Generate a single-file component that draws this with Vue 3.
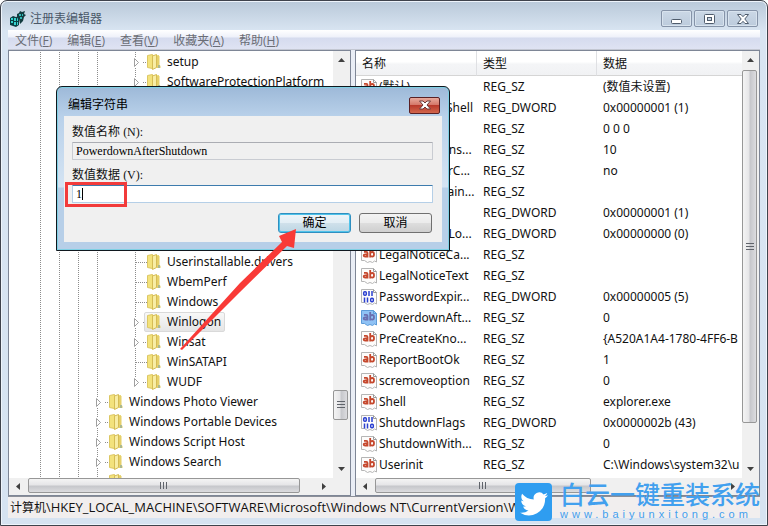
<script setup>
import { ref } from 'vue'

const menus = [
  { label: '文件', key: 'F' },
  { label: '编辑', key: 'E' },
  { label: '查看', key: 'V' },
  { label: '收藏夹', key: 'A' },
  { label: '帮助', key: 'H' },
]

// each entry is one ancestor column; true draws its dotted line
const deep = [true, true, true, true, false]
const shallow = [true, true, true]
const tree = [
  { guides: deep, label: 'setup', expandable: true },
  { guides: deep, label: 'SoftwareProtectionPlatform', expandable: true },
  ...Array.from({ length: 8 }, () => ({ guides: deep })),
  { guides: deep, label: 'Userinstallable.drivers' },
  { guides: deep, label: 'WbemPerf' },
  { guides: deep, label: 'Windows' },
  { guides: deep, label: 'Winlogon', expandable: true, selected: true },
  { guides: deep, label: 'Winsat', expandable: true },
  { guides: deep, label: 'WinSATAPI' },
  { guides: deep, label: 'WUDF', expandable: true, last: true },
  { guides: shallow, label: 'Windows Photo Viewer', expandable: true },
  { guides: shallow, label: 'Windows Portable Devices', expandable: true },
  { guides: shallow, label: 'Windows Script Host', expandable: true },
  { guides: shallow, label: 'Windows Search', expandable: true },
  { guides: shallow, label: '', expandable: true },
]

const values = [
  { name: '(默认)', type: 'REG_SZ', data: '(数值未设置)' },
  { name: 'AutoRestartShell', type: 'REG_DWORD', data: '0x00000001 (1)' },
  { name: '', type: 'REG_SZ', data: '0 0 0' },
  { name: 'CachedLogons...', type: 'REG_SZ', data: '10' },
  { name: 'DebugServerC...', type: 'REG_SZ', data: 'no' },
  { name: 'DefaultDomain...', type: 'REG_SZ', data: '' },
  { name: '', type: 'REG_DWORD', data: '0x00000001 (1)' },
  { name: 'ForceUnlockLo...', type: 'REG_DWORD', data: '0x00000000 (0)' },
  { name: 'LegalNoticeCa...', type: 'REG_SZ', data: '' },
  { name: 'LegalNoticeText', type: 'REG_SZ', data: '' },
  { name: 'PasswordExpir...', type: 'REG_DWORD', data: '0x00000005 (5)' },
  { name: 'PowerdownAft...', type: 'REG_SZ', data: '0', selected: true },
  { name: 'PreCreateKno...', type: 'REG_SZ', data: '{A520A1A4-1780-4FF6-B' },
  { name: 'ReportBootOk', type: 'REG_SZ', data: '1' },
  { name: 'scremoveoption', type: 'REG_SZ', data: '0' },
  { name: 'Shell', type: 'REG_SZ', data: 'explorer.exe' },
  { name: 'ShutdownFlags', type: 'REG_DWORD', data: '0x0000002b (43)' },
  { name: 'ShutdownWith...', type: 'REG_SZ', data: '0' },
  { name: 'Userinit', type: 'REG_SZ', data: 'C:\\Windows\\system32\\u' },
]

const path = '\\HKEY_LOCAL_MACHINE\\SOFTWARE\\Microsoft\\Windows NT\\CurrentVersion\\Win'
const valueName = 'PowerdownAfterShutdown'
const valueData = ref('1')
</script>

<template>
  <div class="window">
    <header class="titlebar">
      <svg class="app-icon" width="18" height="18" viewBox="0 0 18 18">
        <path d="M1 8l3-2 3 1 3-1v9l-3 2-6-2z" fill="#0b3f44" />
        <path d="M2 8h2v2H2zM5 8h2v3H5zM2 11h2v2H2zM5 12h2v3H5zM8 8h1v3H8zM8 12h1v3H8z" fill="#35d3cf" />
        <path d="M8 4l2-1 1-2 2 1 3-1-1 3 2 1-2 2-1 4-3 3-1-5-2-1z" fill="#123c40" />
        <path d="M10 4h2v2h-2zM13 4h1v2h-1zM11 7h2v2h-2z" fill="#2fb9b6" />
      </svg>
      <h1 class="title">注册表编辑器</h1>
      <div class="caption-buttons">
        <button class="caption" type="button" aria-label="最小化">
          <svg width="12" height="12" viewBox="0 0 12 12"><rect x="0.5" y="6.5" width="10" height="4" rx="1" fill="#fff" stroke="#4f5c6c" /></svg>
        </button>
        <button class="caption" type="button" aria-label="最大化">
          <svg width="12" height="12" viewBox="0 0 12 12"><rect x="0.5" y="1.5" width="10" height="9" rx="1" fill="#fff" stroke="#4f5c6c" /><rect x="3.5" y="4.5" width="4" height="3" fill="#c5d3e2" stroke="#4f5c6c" /></svg>
        </button>
        <button class="caption" type="button" aria-label="关闭">
          <svg width="12" height="12" viewBox="0 0 12 12"><path d="M0.5 1.5h3.5l2 2.200 2-2.200h3.500l-3.700 4.500 3.700 4.500h-3.500l-2-2.200-2 2.200h-3.500l3.700-4.500z" fill="#fff" stroke="#4f5c6c" /></svg>
        </button>
      </div>
    </header>

    <nav class="menubar">
      <button v-for="m in menus" :key="m.key" class="menu" type="button">{{ m.label }}(<u>{{ m.key }}</u>)</button>
    </nav>

    <main class="panes">
      <section class="pane">
        <ul class="tree">
          <li v-for="(node, i) in tree" :key="i" class="node">
            <span v-for="(on, g) in node.guides" :key="g" class="guide" :class="{ on }"></span>
            <svg class="joint" width="18" height="20" viewBox="0 0 18 20">
              <g stroke="#8c8c8c" stroke-dasharray="1 1" fill="none">
                <template v-if="node.expandable">
                  <path d="M9.500 0v5" />
                  <path v-if="!node.last" d="M9.500 16v4" />
                  <path d="M17 10.500h4" />
                </template>
                <template v-else>
                  <path d="M9.500 0v20" />
                  <path d="M10 10.500h11" />
                </template>
              </g>
              <path v-if="node.expandable" d="M8.500 6.500v8l4-4z" fill="#fff" stroke="#a0a0a0" />
            </svg>
            <span class="item" :class="{ selected: node.selected }">
              <svg v-if="node.label !== undefined" width="14" height="16" viewBox="0 0 14 16">
                <path d="M5 1.500l7-0.500v12l-6 1z" fill="#e9d873" />
                <path d="M0.500 1.500l5-1v14l-5-1z" fill="#f3e27c" stroke="#dcc764" />
                <path d="M5.500 2l4-1.500v13l-4 2z" fill="#f8eda5" stroke="#d5bc55" />
                <path d="M10 2l2.500 0v9l1 1v2l-3.500 0z" fill="#e6d06a" />
                <path d="M12 11v3" stroke="#6fa0b8" />
              </svg>
              <span v-if="node.label" class="label">{{ node.label }}</span>
            </span>
          </li>
        </ul>
        <div class="vbar">
          <svg class="arrow" width="17" height="17" viewBox="0 0 17 17"><path d="M5 11l3.500-4 3.500 4z" fill="#404040" /></svg>
          <div class="track left-track"><div class="thumb"><i></i><i></i><i></i></div></div>
          <svg class="arrow" width="17" height="17" viewBox="0 0 17 17"><path d="M5 6l3.500 4 3.500-4z" fill="#404040" /></svg>
        </div>
        <div class="hbar">
          <svg class="arrow" width="19" height="17" viewBox="0 0 19 17"><path d="M11 5l-4 3.500 4 3.500z" fill="#404040" /></svg>
          <div class="track"><div class="thumb tree-h"><i></i><i></i><i></i></div></div>
          <svg class="arrow" width="19" height="17" viewBox="0 0 19 17"><path d="M8 5l4 3.500-4 3.500z" fill="#404040" /></svg>
        </div>
        <div class="corner"></div>
      </section>

      <section class="pane">
        <div class="list">
          <table>
            <colgroup><col class="c-name" /><col class="c-type" /><col /></colgroup>
            <thead>
              <tr><th scope="col">名称</th><th scope="col">类型</th><th scope="col">数据</th></tr>
            </thead>
            <tbody>
              <tr v-for="(v, i) in values" :key="i">
                <td class="name">
                  <div class="name-box">
                    <svg class="value-icon" width="16" height="16" viewBox="0 0 16 16">
                      <path d="M0.500 0.500h12l3 3v11.500l-2-1-2 1.500-2.500-1-2.500 1-3-2-3 0z" :fill="v.selected ? '#8fc2f5' : '#fdfcfb'" :stroke="v.selected ? '#5d9bd8' : '#b5b5b5'" />
                      <path d="M12.500 0.500v3h3" fill="none" :stroke="v.selected ? '#5d9bd8' : '#9a9a9a'" />
                      <g v-if="v.type === 'REG_DWORD'" fill="none" stroke="#2a3fd0" stroke-width="1.500">
                        <rect x="2.700" y="2.700" width="2.600" height="3.600" rx="1" /><path d="M8 2v5M11 2v5M3.500 8.500v5M6.500 8.500v5" />
                        <rect x="9.700" y="9.200" width="2.600" height="3.600" rx="1" />
                      </g>
                      <g v-else fill="none" :stroke="v.selected ? '#6a6fb0' : '#c5472c'" stroke-width="1.800">
                        <path d="M3 4.800h2.300q1.200 0 1.200 1.200v4.500M6.500 7.300h-2.300q-1.500 0-1.500 1.200t1.500 1.200q1.800 0 2.300-1.400" />
                        <path d="M9.200 2v8.500M9.200 6.300q0.500-1.300 2-1.300 1.800 0 1.800 2.300t-1.800 2.300q-1.500 0-2-1.200" />
                      </g>
                    </svg>
                    <span>{{ v.name }}</span>
                  </div>
                </td>
                <td>{{ v.type }}</td>
                <td>{{ v.data }}</td>
              </tr>
            </tbody>
          </table>
        </div>
        <div class="vbar">
          <svg class="arrow" width="17" height="17" viewBox="0 0 17 17"><path d="M5 11l3.500-4 3.500 4z" fill="#404040" /></svg>
          <div class="track list-track"><div class="thumb"><i></i><i></i><i></i></div></div>
          <svg class="arrow" width="17" height="17" viewBox="0 0 17 17"><path d="M5 6l3.500 4 3.500-4z" fill="#404040" /></svg>
        </div>
        <div class="hbar">
          <svg class="arrow" width="19" height="17" viewBox="0 0 19 17"><path d="M11 5l-4 3.500 4 3.500z" fill="#404040" /></svg>
          <div class="track"><div class="thumb list-h"><i></i><i></i><i></i></div></div>
          <svg class="arrow" width="19" height="17" viewBox="0 0 19 17"><path d="M8 5l4 3.500-4 3.500z" fill="#404040" /></svg>
        </div>
        <div class="corner"></div>
      </section>
    </main>

    <footer class="status"><span class="root">计算机</span>{{ path }}</footer>

    <form class="dialog" @submit.prevent>
      <div class="dialog-title">
        <h2>编辑字符串</h2>
        <button class="dialog-close" type="button" aria-label="关闭">
          <svg width="12" height="12" viewBox="0 0 12 12"><path d="M0.500 2h3.500l2 2 2-2h3.500l-3.500 4 3.500 4h-3.500l-2-2-2 2h-3.500l3.500-4z" fill="#fff" stroke="#6b3a3a" /></svg>
        </button>
      </div>
      <div class="dialog-body">
        <label for="value-name">数值名称 <span class="roman">(N):</span></label>
        <input id="value-name" class="roman" :value="valueName" readonly />
        <label for="value-data">数值数据 <span class="roman">(V):</span></label>
        <div class="data-field">
          <input id="value-data" v-model="valueData" class="roman active" />
          <span class="caret"></span>
          <span class="highlight"></span>
        </div>
        <div class="actions">
          <button class="push default" type="submit">确定</button>
          <button class="push" type="button">取消</button>
        </div>
      </div>
    </form>

    <svg class="pointer" width="118" height="125" viewBox="0 0 118 125">
      <path d="M116 2L99 9l3 6L60 56 0 122l2 1L60 65l47-46 7 2z" fill="#f93a37" />
    </svg>

    <div class="watermark">
      <svg width="37" height="38" viewBox="0 0 37 38">
        <rect width="37" height="38" rx="4" fill="#2f9df0" />
        <path d="M33 12.200c-1 .5-2.100.8-3.300.9 1.200-.7 2.100-1.800 2.500-3.100-1.100.7-2.300 1.100-3.600 1.400a5.700 5.700 0 0 0-9.800 5.200c-4.700-.2-8.900-2.500-11.700-5.900-1.500 2.600-.8 6 1.700 7.600-.9 0-1.800-.3-2.600-.7 0 2.700 1.900 5.200 4.600 5.700-.8.200-1.700.3-2.600.1.700 2.300 2.800 3.900 5.300 4a11.500 11.500 0 0 1-8.400 2.300 16.200 16.200 0 0 0 25-14.400c1.100-.8 2.100-1.800 2.900-3.100z" fill="#fff" />
      </svg>
      <div class="brand">
        <strong>白云一键重装系统</strong>
        <span>www.baiyunxitong.com</span>
      </div>
    </div>
  </div>
</template>

<style>
body {
  margin: 0;
  background: #fff;
}
</style>

<style scoped>
* {
  box-sizing: border-box;
}

.window {
  position: relative;
  display: flex;
  flex-direction: column;
  height: 100vh;
  padding: 0 7px 7px;
  border: 1px solid #3f434c;
  border-radius: 7px 7px 0 0;
  overflow: hidden;
  background: linear-gradient(#b9c9d9, #d9e5f2 30px, #d6e3f1);
  box-shadow: inset 0 0 0 1px #eef4fb;
  font-family: "Open Sans", "Noto Sans CJK SC", sans-serif;
  font-size: 13px;
  line-height: 20px;
  color: #111;
}

button {
  font-family: inherit;
}

.titlebar {
  display: flex;
  align-items: center;
  flex: none;
  height: 29px;
  padding: 6px 2px 0 1px;
}

.app-icon {
  margin-right: 3px;
}

.title {
  flex: 1;
  margin: 0;
  font-size: 12px;
  font-weight: 400;
  color: #4a5868;
}

.caption-buttons {
  display: flex;
  gap: 2px;
}

.caption {
  display: flex;
  align-items: center;
  justify-content: center;
  width: 31px;
  height: 17px;
  padding: 0;
  border: 1px solid #8593a8;
  border-radius: 2px;
  background: linear-gradient(#cbd8e6, #bccbdc);
  box-shadow: inset 0 0 0 1px #d8e3ee;
}

.menubar {
  display: flex;
  align-items: center;
  flex: none;
  gap: 15px;
  height: 20px;
  padding: 2px 0 0 7px;
  border-bottom: 1px solid #c3c7d2;
  background: linear-gradient(#fff, #eef1fa 7px, #d5dbee 8px, #dfe3f3);
}

.menu {
  padding: 0;
  border: 0;
  background: none;
  font-size: 12px;
  line-height: 18px;
  color: #6a6d75;
}

.panes {
  display: grid;
  grid-template-columns: 343px minmax(0, 1fr);
  flex: 1;
  gap: 4px;
  min-height: 0;
  background: #e9edf5;
}

.pane {
  display: grid;
  grid-template-columns: minmax(0, 1fr) 17px;
  grid-template-rows: minmax(0, 1fr) 17px;
  min-height: 0;
  border: 1px solid #7e8696;
  background: #fff;
}

.tree {
  min-height: 0;
  margin: 0;
  padding: 1px 0 0 22px;
  overflow: hidden;
  font-family: "Noto Sans", "Noto Sans CJK SC", sans-serif;
  font-size: 12px;
  list-style: none;
}

.node {
  display: flex;
  height: 20px;
}

.guide {
  flex: none;
  width: 19px;
}

.guide.on {
  background: repeating-linear-gradient(#8c8c8c 0 1px, transparent 1px 2px) 9px 0 / 1px 100% no-repeat;
}

.joint {
  flex: none;
  overflow: visible;
}

.item {
  display: flex;
  align-items: center;
  gap: 6px;
  padding: 0 3px 0 2px;
  border: 1px solid transparent;
  border-radius: 2px;
  line-height: 18px;
  white-space: nowrap;
}

.item.selected {
  border-color: #d9d9d9;
  background: linear-gradient(#f8f8f8, #e5e5e5);
}

.vbar,
.hbar {
  display: flex;
  background: #f0f0f0;
}

.vbar {
  flex-direction: column;
}

.arrow {
  flex: none;
}

.track {
  display: flex;
  flex: 1;
  min-width: 0;
  min-height: 0;
}

.vbar .track {
  flex-direction: column;
}

.thumb {
  display: flex;
  align-items: center;
  justify-content: center;
  gap: 1px;
  border: 1px solid #979797;
  border-radius: 2px;
}

.vbar .thumb {
  flex-direction: column;
  width: 15px;
  background: linear-gradient(90deg, #f4f4f4, #e6e6e8 45%, #c6c7cb 55%, #dcdcdf);
}

.hbar .thumb {
  height: 15px;
  background: linear-gradient(#f4f4f4, #e6e6e8 45%, #c6c7cb 55%, #dcdcdf);
}

.vbar .thumb i {
  width: 8px;
  height: 2px;
  border-top: 1px solid #60646b;
}

.hbar .thumb i {
  width: 2px;
  height: 7px;
  border-left: 1px solid #60646b;
}

.left-track {
  padding-top: 322px;
}

.left-track .thumb {
  height: 30px;
}

.list-track {
  padding-top: 2px;
}

.list-track .thumb {
  height: 353px;
}

.tree-h {
  width: 95%;
}

.list-h {
  width: 62%;
}

.corner {
  background: #f0f0f0;
}

.list {
  min-height: 0;
  overflow: hidden;
}

table {
  width: 100%;
  border-collapse: separate;
  border-spacing: 0;
  font-family: "Noto Sans", "Noto Sans CJK SC", sans-serif;
  font-size: 12px;
  table-layout: fixed;
}

.c-name {
  width: 121px;
}

.c-type {
  width: 120px;
}

th {
  height: 25px;
  padding: 1px 6px 0;
  border-right: 1px solid #dfe0e3;
  border-bottom: 1px solid #d5d5d5;
  background: linear-gradient(#fff, #fff 45%, #f4f5f7 55%, #f1f2f4);
  font-weight: 400;
  line-height: 20px;
  text-align: left;
}

th:last-child {
  border-right: 0;
}

td {
  height: 21px;
  padding: 0 0 0 6px;
  overflow: hidden;
  line-height: 21px;
  white-space: nowrap;
}

.name {
  padding-left: 5px;
}

.name-box {
  display: flex;
  align-items: center;
  gap: 2px;
  height: 21px;
}

.value-icon {
  flex: none;
}

.status {
  flex: none;
  height: 22px;
  padding: 0 2px;
  overflow: hidden;
  border-top: 1px solid #8b8f98;
  background: #f1eeee;
  white-space: nowrap;
}

.root {
  font-size: 12px;
}

.dialog {
  position: absolute;
  top: 85px;
  left: 55px;
  z-index: 1;
  width: 394px;
  padding: 0 7px 8px;
  border: 1px solid #10181f;
  border-radius: 6px 6px 0 0;
  background: linear-gradient(#9db9d8, #b9d1ea 30px, #d5e4f3 100px, #b7cfe8 101px);
  box-shadow: inset 0 0 0 1px #7fd0e4;
  font-size: 12px;
}

.dialog-title {
  display: flex;
  align-items: center;
  justify-content: space-between;
  height: 29px;
  padding: 7px 2px 0 4px;
}

.dialog-title h2 {
  margin: 0;
  font-size: 12px;
  font-weight: 400;
  color: #000;
}

.dialog-close {
  display: flex;
  align-items: center;
  justify-content: center;
  width: 31px;
  height: 17px;
  padding: 0;
  border: 1px solid #5a2024;
  border-radius: 2px;
  background: linear-gradient(#e8a99c, #d5786a 45%, #b93a2c 50%, #d2664c);
}

.dialog-body {
  padding: 7px 9px 9px 8px;
  background: #f0f0f0;
}

.dialog-body label {
  display: block;
  height: 19px;
  line-height: 18px;
}

.dialog-body input + label {
  margin-top: 6px;
}

.roman {
  font-family: "Liberation Serif", serif;
  font-size: 12px;
}

input {
  display: block;
  width: 100%;
  height: 18px;
  padding: 0 3px;
  border: 1px solid #c9ccd2;
  border-top-color: #abadb3;
  border-radius: 1px;
  outline: 0;
  background: #f0f0f0;
  color: #000;
}

input.active {
  border-color: #b5cfe7;
  border-top-color: #3d7bad;
  background: #fff;
}

.data-field {
  position: relative;
}

.caret {
  position: absolute;
  top: 3px;
  left: 10px;
  width: 1px;
  height: 12px;
  background: #000;
}

.highlight {
  position: absolute;
  top: -3px;
  left: -7px;
  width: 62px;
  height: 25px;
  border: 3px solid #f23b3b;
}

.actions {
  display: flex;
  justify-content: flex-end;
  gap: 8px;
  padding: 10px 1px 0 0;
}

.push {
  width: 73px;
  height: 20px;
  padding: 0;
  border: 1px solid #707070;
  border-radius: 3px;
  background: linear-gradient(#f3f3f3, #ebebeb 48%, #dddddd 52%, #cfcfcf);
  font-size: 12px;
  line-height: 18px;
  color: #000;
}

.push.default {
  border-color: #2f8fc0;
  background: linear-gradient(#eef5f9, #e2eef5 48%, #cfe0ea 52%, #bcd6e4);
  box-shadow: inset 0 0 0 1px #4fc3ea;
}

.pointer {
  position: absolute;
  top: 226px;
  left: 179px;
  z-index: 2;
}

.watermark {
  position: absolute;
  right: 7px;
  bottom: 4px;
  display: flex;
  align-items: flex-end;
  gap: 8px;
  color: #42a0ee;
}

.brand {
  display: flex;
  flex-direction: column;
  width: 200px;
}

.brand strong {
  font-size: 25px;
  font-weight: 500;
  line-height: 26px;
}

.brand span {
  font-family: "Liberation Sans", sans-serif;
  font-size: 11px;
  line-height: 14px;
  letter-spacing: 4px;
}
</style>
